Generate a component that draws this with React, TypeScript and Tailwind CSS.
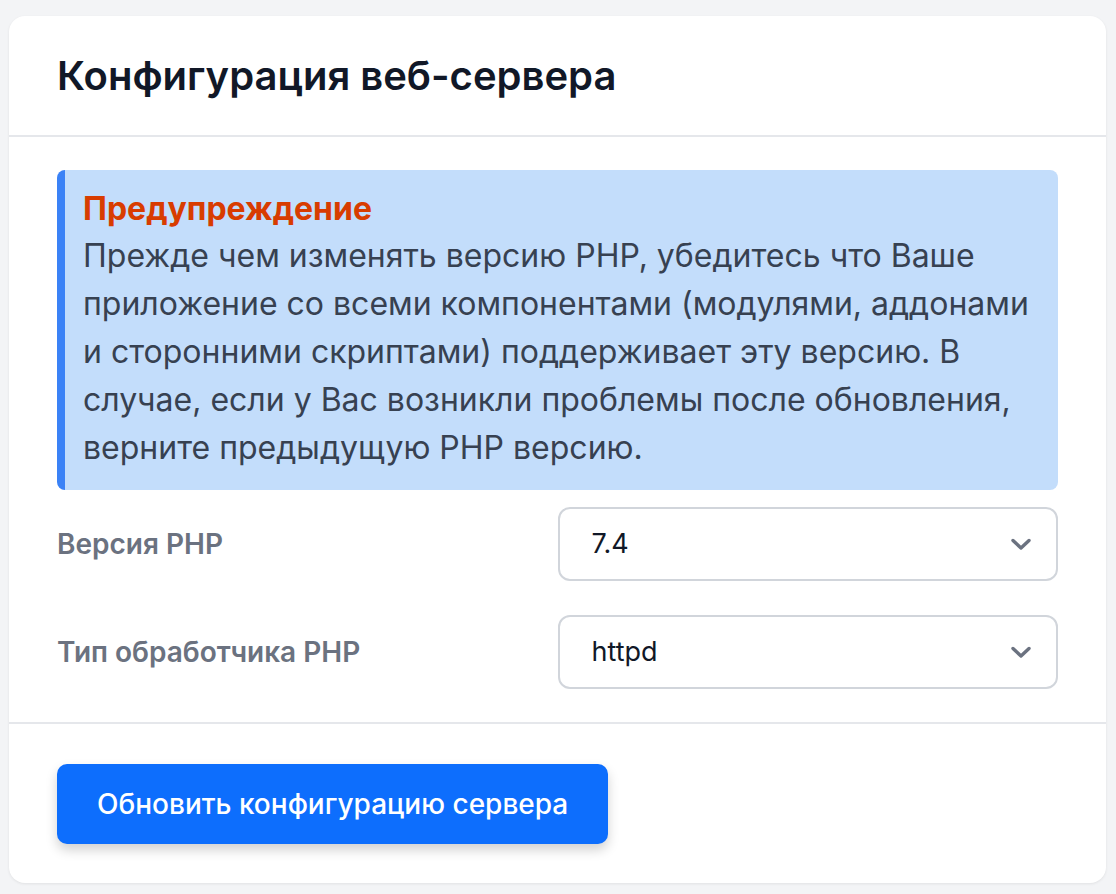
import React from "react";

function Chevron() {
  return (
    <svg width="22" height="14" viewBox="0 0 22 14" fill="none" className="shrink-0">
      <path d="M3 3.5 L11 11 L19 3.5" stroke="#6b7280" strokeWidth="3.4" strokeLinecap="round" strokeLinejoin="round" />
    </svg>
  );
}

function Select({ value }: { value: string }) {
  return (
    <div className="flex h-[74px] items-center justify-between rounded-xl border-2 border-[#d1d5db] bg-white pl-[32px] pr-[24px]">
      <span className="text-[27px] text-[#111827]">{value}</span>
      <Chevron />
    </div>
  );
}

export default function App() {
  return (
    <div
      className="min-h-[894px] bg-[#f3f4f6] pl-[9px] pr-[10px] pt-4 pb-[11px]"
      style={{ fontFamily: "Inter, 'Noto Sans', sans-serif" }}
    >
      <div className="rounded-2xl bg-white shadow-[0_1px_3px_rgba(0,0,0,0.08)]">
        <div className="flex h-[121px] items-center border-b-2 border-[#e5e7eb] px-12">
          <h1 className="text-[40px] font-semibold leading-none text-[#111827]">Конфигурация веб-сервера</h1>
        </div>
        <div className="px-12 pt-[33px] pb-[33px]">
          <div className="rounded-lg border-l-[8px] border-[#3b82f6] bg-[#c3ddfb] pl-[18px] pr-6 pt-[16px] pb-[18px]">
            <div className="text-[32px] font-bold leading-[46px] text-[#d83c00]">Предупреждение</div>
            <p className="text-[32px] leading-[48px] text-[#374151]">
              Прежде чем изменять версию PHP, убедитесь что Ваше приложение со всеми компонентами (модулями, аддонами и сторонними скриптами) поддерживает эту версию. В случае, если у Вас возникли проблемы после обновления, верните предыдущую PHP версию.
            </p>
          </div>
          <div className="mt-[17px] grid grid-cols-2 items-center gap-y-[34px]">
            <div className="text-[28px] font-semibold text-[#6b7280]">Версия PHP</div>
            <Select value="7.4" />
            <div className="text-[28px] font-semibold text-[#6b7280]">Тип обработчика PHP</div>
            <Select value="httpd" />
          </div>
        </div>
        <div className="border-t-2 border-[#e5e7eb] px-12 pt-[40px] pb-[39px]">
          <button className="h-[80px] rounded-[10px] bg-[#0d6efd] px-10 text-[28px] font-medium text-white shadow-[0_6px_12px_rgba(0,0,0,0.18)]">
            Обновить конфигурацию сервера
          </button>
        </div>
      </div>
    </div>
  );
}
